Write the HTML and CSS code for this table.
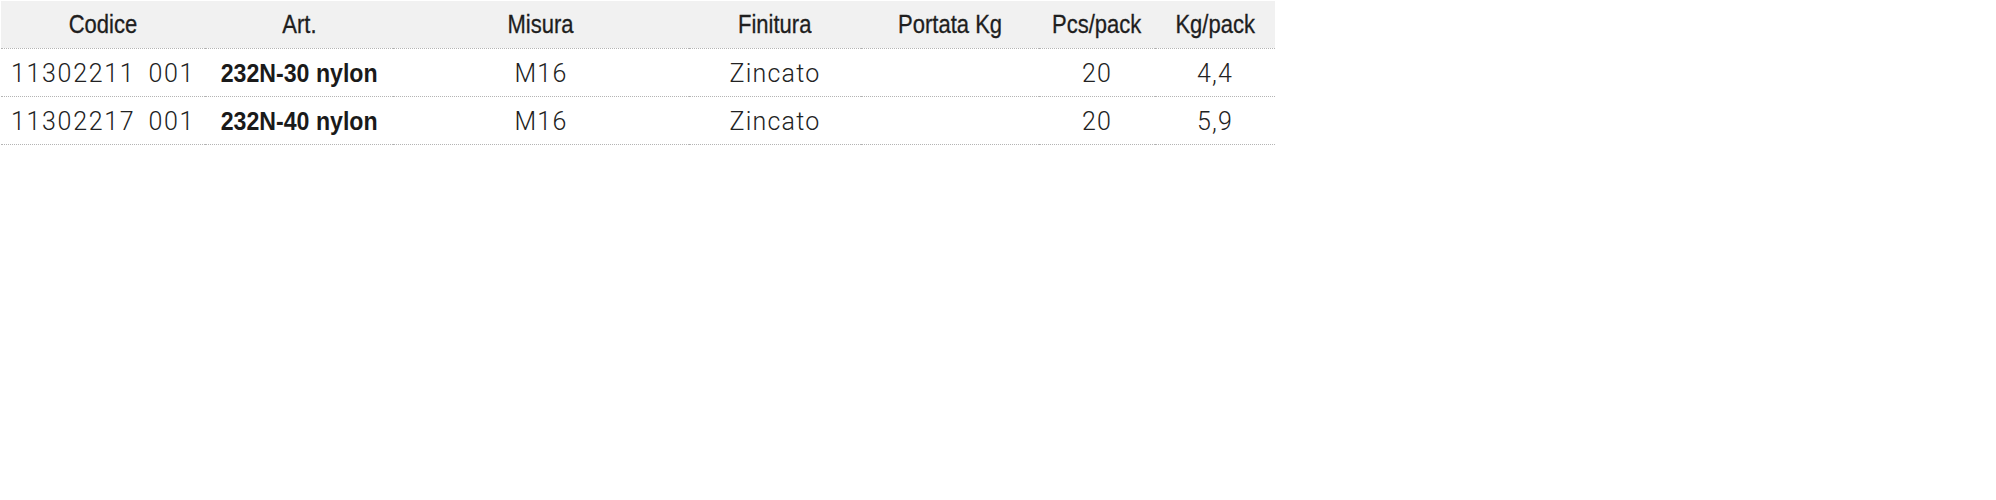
FILE: index.html
```html
<!DOCTYPE html>
<html lang="it">
<head>
<meta charset="utf-8">
<title>Tabella articoli</title>
<link rel="stylesheet" href="styles.css">
</head>
<body>
<div class="wrap">
<table class="products">
  <colgroup>
    <col class="c1"><col class="c2"><col class="c3"><col class="c4"><col class="c5"><col class="c6"><col class="c7">
  </colgroup>
  <thead>
    <tr>
      <th><span class="cond">Codice</span></th>
      <th><span class="cond">Art.</span></th>
      <th><span class="cond">Misura</span></th>
      <th><span class="cond">Finitura</span></th>
      <th><span class="cond">Portata Kg</span></th>
      <th><span class="cond">Pcs/pack</span></th>
      <th><span class="cond">Kg/pack</span></th>
    </tr>
  </thead>
  <tbody>
    <tr>
      <td><span class="code">11302211</span><span class="sub">001</span></td>
      <td class="art"><span class="cond">232N-30 nylon</span></td>
      <td>M16</td>
      <td>Zincato</td>
      <td></td>
      <td>20</td>
      <td>4,4</td>
    </tr>
    <tr>
      <td><span class="code">11302217</span><span class="sub">001</span></td>
      <td class="art"><span class="cond">232N-40 nylon</span></td>
      <td>M16</td>
      <td>Zincato</td>
      <td></td>
      <td>20</td>
      <td>5,9</td>
    </tr>
  </tbody>
</table>
</div>
</body>
</html>
```

FILE: styles.css
```css
html, body {
  margin: 0;
  padding: 0;
  background: #ffffff;
}

.wrap {
  padding: 1px 0 0 1px;
}

.products {
  border-collapse: collapse;
  table-layout: fixed;
  width: 1274px;
  color: #222222;
}

.c1 { width: 204px; }
.c2 { width: 188px; }
.c3 { width: 296px; }
.c4 { width: 172px; }
.c5 { width: 178px; }
.c6 { width: 116px; }
.c7 { width: 120px; }

.cond {
  display: inline-block;
  transform: scaleX(0.88);
  transform-origin: center;
}

.products th {
  background: #f1f1f1;
  height: 47px;
  padding: 0;
  box-sizing: border-box;
  font-family: "Liberation Sans", Arial, sans-serif;
  font-weight: normal;
  font-size: 25px;
  -webkit-text-stroke: 0.3px #1e1e1e;
  color: #1e1e1e;
  text-align: center;
  vertical-align: middle;
  border-bottom: 1px dotted #b4b4b4;
  white-space: nowrap;
}

.products td {
  height: 48px;
  padding: 3px 0 0 0;
  box-sizing: border-box;
  font-family: Roboto, "Liberation Sans", sans-serif;
  font-weight: 300;
  font-size: 25px;
  letter-spacing: 1.2px;
  color: #222222;
  text-align: center;
  vertical-align: middle;
  border-bottom: 1px dotted #b4b4b4;
  white-space: nowrap;
}

.products td .code,
.products td .sub {
  letter-spacing: 1.7px;
}

.products td .sub {
  margin-left: 13px;
}

.products td.art {
  font-family: "Liberation Sans", Arial, sans-serif;
  font-weight: bold;
  font-size: 26px;
  letter-spacing: 0;
  color: #1a1a1a;
}

.products td.art .cond {
  transform: scaleX(0.89);
}
```
